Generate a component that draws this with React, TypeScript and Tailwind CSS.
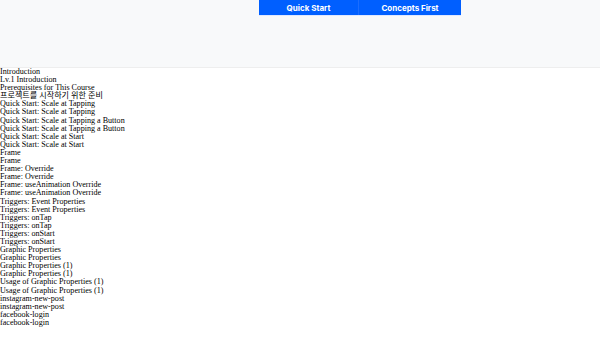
import React from 'react';

const lessons = [
  'Introduction',
  'Lv.1 Introduction',
  'Prerequisites for This Course',
  '프로젝트를 시작하기 위한 준비',
  'Quick Start: Scale at Tapping',
  'Quick Start: Scale at Tapping',
  'Quick Start: Scale at Tapping a Button',
  'Quick Start: Scale at Tapping a Button',
  'Quick Start: Scale at Start',
  'Quick Start: Scale at Start',
  'Frame',
  'Frame',
  'Frame: Override',
  'Frame: Override',
  'Frame: useAnimation Override',
  'Frame: useAnimation Override',
  'Triggers: Event Properties',
  'Triggers: Event Properties',
  'Triggers: onTap',
  'Triggers: onTap',
  'Triggers: onStart',
  'Triggers: onStart',
  'Graphic Properties',
  'Graphic Properties',
  'Graphic Properties (1)',
  'Graphic Properties (1)',
  'Usage of Graphic Properties (1)',
  'Usage of Graphic Properties (1)',
  'instagram-new-post',
  'instagram-new-post',
  'facebook-login',
  'facebook-login',
];

export default function App() {
  return (
    <div className="min-h-[356px] bg-white">
      {/* Header with tabs */}
      <div className="h-[68px] bg-[#f8f9fa] border-b border-[#eeeeee] flex pl-[259px]">
        <div className="flex h-[15px] w-[202px] bg-[#005fff] shadow-[0_1px_0_#dfe8ff]">
          <button className="w-[100px] flex items-center justify-center text-white text-[8px] font-bold font-['Inter',sans-serif] border-r border-[#1b6dff]">
            Quick Start
          </button>
          <button className="flex-1 flex items-center justify-center text-white text-[8px] font-bold font-['Inter',sans-serif]">
            Concepts First
          </button>
        </div>
      </div>

      {/* Lesson list */}
      <div className="font-['Liberation_Serif','Noto_Sans_CJK_KR',serif] text-[8.1px] leading-[8.1px] text-black">
        {lessons.map((title, i) => (
          <div key={i}>{title}</div>
        ))}
      </div>
    </div>
  );
}
